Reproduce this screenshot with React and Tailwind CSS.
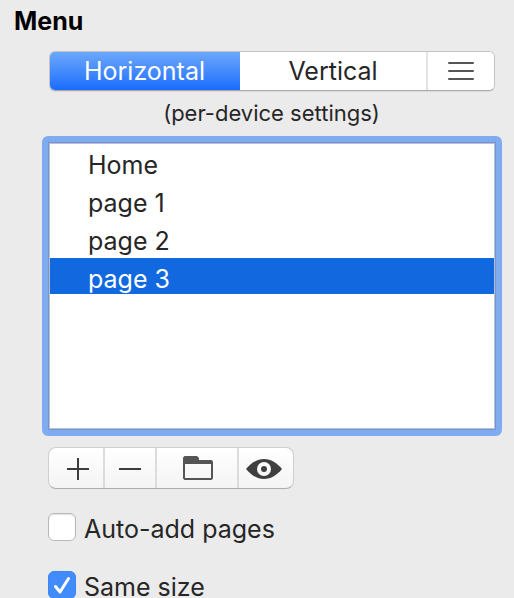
import { useState } from 'react'

const pages = ['Home', 'page 1', 'page 2', 'page 3']

function OrientationControl() {
  const [mode, setMode] = useState('horizontal')

  const segment = (value) =>
    mode === value
      ? 'bg-linear-to-b from-[#6ea8fa] to-[#146afe] text-white shadow-[inset_0_1px_0_#4b8df0]'
      : 'bg-white text-[#262626]'

  return (
    <div className="ml-px flex h-10 overflow-hidden rounded-md border border-[#c3c3c3] border-b-[#a9a9a9] bg-white text-[25px] leading-8 shadow-[0_1px_0_#dcdcdc]">
      <button
        type="button"
        aria-pressed={mode === 'horizontal'}
        onClick={() => setMode('horizontal')}
        className={`-my-px -ml-px w-[191px] shrink-0 rounded-l-md ${segment('horizontal')}`}
      >
        Horizontal
      </button>
      <button
        type="button"
        aria-pressed={mode === 'vertical'}
        onClick={() => setMode('vertical')}
        className={`flex-1 ${segment('vertical')}`}
      >
        Vertical
      </button>
      <button
        type="button"
        aria-label="Hamburger"
        aria-pressed={mode === 'hamburger'}
        onClick={() => setMode('hamburger')}
        className={`flex w-17 shrink-0 items-center justify-center border-l-2 border-[#e3e3e3] ${segment('hamburger')}`}
      >
        <svg width="26" height="18" viewBox="0 0 26 18" stroke="#555" strokeWidth="2" strokeLinecap="round">
          <path d="M1 1h24M1 9h24M1 17h24" />
        </svg>
      </button>
    </div>
  )
}

function PageList() {
  const [selected, setSelected] = useState('page 3')

  return (
    <div className="-mr-[7px] -ml-1.5 rounded-md border-6 border-[#80abef] bg-[#6b95dc] p-px">
      <ul className="flex h-[286px] flex-col gap-0.5 border border-[#bfc1c6] bg-white text-[25px] leading-7">
        {pages.map((page) => (
          <li key={page}>
            <button
              type="button"
              aria-pressed={selected === page}
              onClick={() => setSelected(page)}
              className={`block h-9 w-full pt-1.5 pl-[38px] text-left ${
                selected === page ? 'bg-[#1168df] text-white' : 'text-[#262626]'
              }`}
            >
              {page}
            </button>
          </li>
        ))}
      </ul>
    </div>
  )
}

function Toolbar() {
  const button = 'flex items-center justify-center'

  return (
    <div className="flex h-[42px] w-[246px] divide-x-2 divide-[#dcdcdc] overflow-hidden rounded-lg border border-[#cfcfcf] border-b-[#adadad] bg-linear-to-b from-white to-[#f4f4f4]">
      <button type="button" aria-label="Add page" className={`${button} w-14 pt-px pl-1`}>
        <svg width="22" height="22" viewBox="0 0 22 22" stroke="#3c3c3c" strokeWidth="2">
          <path d="M11 0v22M0 11h22" />
        </svg>
      </button>
      <button type="button" aria-label="Remove page" className={`${button} w-13 pt-px`}>
        <svg width="22" height="22" viewBox="0 0 22 22" stroke="#3c3c3c" strokeWidth="2">
          <path d="M0 11h22" />
        </svg>
      </button>
      <button type="button" aria-label="Add folder" className={`${button} w-[82px] pl-0.5`}>
        <svg width="30" height="24" viewBox="0 0 30 24">
          <path
            fill="#555"
            fillRule="evenodd"
            d="M1.500 0H14l2 2v2h12.500L30 5.500v17L28.500 24h-27L0 22.500v-21zM2 8v14h26V8z"
          />
        </svg>
      </button>
      <button type="button" aria-label="Toggle visibility" className={`${button} flex-1 pt-0.5 pr-1`}>
        <svg width="36" height="20" viewBox="0 0 36 20">
          <path fill="#3f3f3f" d="M0 10C5 4 11 0 18 0s13 4 18 10c-5 6-11 10-18 10S5 16 0 10z" />
          <circle cx="18" cy="10" r="5" fill="#3f3f3f" stroke="#fafafa" strokeWidth="4" />
        </svg>
      </button>
    </div>
  )
}

function Checkbox({ id, label, defaultChecked }) {
  return (
    <div className="flex h-7 items-center gap-2">
      <span className="relative size-7 shrink-0">
        <input
          id={id}
          type="checkbox"
          defaultChecked={defaultChecked}
          className="peer block size-7 appearance-none rounded-md border border-[#b9b9b9] bg-white shadow-[inset_0_1px_1px_#e2e2e2] checked:border-[#3c85f5] checked:bg-[#418bfb] checked:shadow-none"
        />
        <svg
          className="pointer-events-none absolute inset-0 hidden peer-checked:block"
          viewBox="0 0 28 28"
          fill="none"
          stroke="white"
          strokeWidth="3"
          strokeLinecap="round"
          strokeLinejoin="round"
        >
          <path d="M7.500 15.500l4.500 5.500 8.500-13.500" />
        </svg>
      </span>
      <label htmlFor={id} className="pt-1 text-[25px] leading-6 text-[#262626]">
        {label}
      </label>
    </div>
  )
}

export default function App() {
  return (
    <div className="min-h-screen bg-[#ebebeb] pt-[5px] font-[Inter,'Liberation_Sans',sans-serif]">
      <h1 className="pl-3.5 text-[25px] leading-8 font-bold text-black">Menu</h1>
      <div className="pt-3.5 pr-[19px] pl-12">
        <OrientationControl />
        <p className="mt-2 text-center text-[22px] leading-7 text-[#262626]">(per-device settings)</p>
        <div className="mt-[9px]">
          <PageList />
        </div>
        <div className="mt-[11px]">
          <Toolbar />
        </div>
        <div className="mt-6 flex flex-col gap-[30px]">
          <Checkbox id="auto-add" label="Auto-add pages" />
          <Checkbox id="same-size" label="Same size" defaultChecked />
        </div>
      </div>
    </div>
  )
}
